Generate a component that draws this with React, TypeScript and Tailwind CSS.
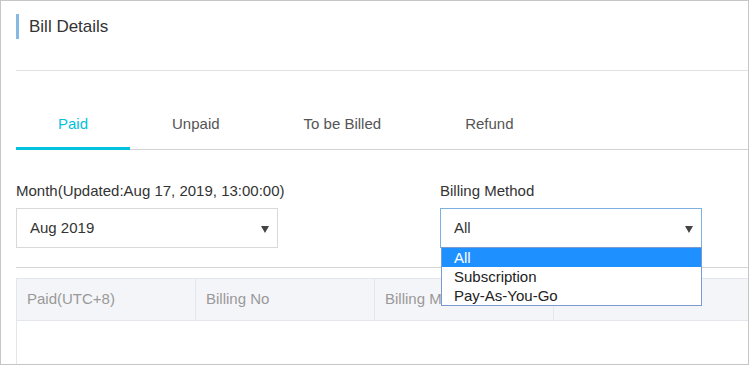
import { useState } from 'react'

const tabs = ['Paid', 'Unpaid', 'To be Billed', 'Refund']
const methods = ['All', 'Subscription', 'Pay-As-You-Go']
const columns = ['Paid(UTC+8)', 'Billing No', 'Billing Method', '']

function Caret() {
    return <span className="absolute right-[8px] top-[17px] h-0 w-0 border-x-[4px] border-t-[7px] border-x-transparent border-t-[#444]" />
}

export default function App() {
    const [active, setActive] = useState(0)
    const [method, setMethod] = useState(0)

    return (
        <div className="h-[366px] w-[749px] bg-white font-['Liberation_Sans',Arial,sans-serif] text-[15px] text-[#333]">
            <div className="flex h-[365px] flex-col overflow-hidden border border-[#c6c6c6] pl-[15px]">
                {/* Title */}
                <div className="h-[70px] border-b border-[#e2e2e2] pt-[13px]">
                    <div className="flex h-[25px] items-center gap-[10px]">
                        <span className="h-full w-[3px] bg-[#86b9e4]" />
                        <h2 className="text-[17px] text-[#333]">Bill Details</h2>
                    </div>
                </div>

                {/* Tabs */}
                <div className="mt-[30px] flex border-b border-[#d3d3d3]">
                    {tabs.map((t, i) => (
                        <button
                            key={t}
                            onClick={() => setActive(i)}
                            className={
                                '-mb-px flex h-[49px] items-center border-b-[3px] px-[42px] pt-[1px] ' +
                                (active === i ? 'border-[#00c1de] text-[#00c1de]' : 'border-transparent text-[#555]')
                            }
                        >
                            {t}
                        </button>
                    ))}
                </div>

                {/* Filters */}
                <div className="mt-[31px] flex">
                    <div className="w-[424px]">
                        <div className="mb-[7px] h-[20px] leading-[20px]">Month(Updated:Aug 17, 2019, 13:00:00)</div>
                        <div className="relative h-[40px] w-[262px] border border-[#d9d9d9] pl-[13px] leading-[38px]">
                            Aug 2019
                            <Caret />
                        </div>
                    </div>
                    <div>
                        <div className="mb-[7px] h-[20px] leading-[20px]">Billing Method</div>
                        <div className="relative h-[40px] w-[262px] border border-[#7eb0e2] pl-[13px] leading-[38px]">
                            {methods[method]}
                            <Caret />
                            <ul className="absolute left-[0px] top-[38px] z-10 w-[261px] border border-[#7b9bd0] bg-white leading-[19px] text-[#222]">
                                {methods.map((m, i) => (
                                    <li
                                        key={m}
                                        onClick={() => setMethod(i)}
                                        className={
                                            'h-[19px] pl-[12px] ' + (i === 0 ? 'bg-[#1e90ff] text-white' : '')
                                        }
                                    >
                                        {m}
                                    </li>
                                ))}
                            </ul>
                        </div>
                    </div>
                </div>

                <div className="mt-[19px] border-b border-[#d5d5d5]" />

                {/* Table */}
                <div className="mt-[10px] flex flex-1 flex-col border-l border-[#e3e7ec]">
                    <div className="flex h-[43px] border-y border-[#e3e7ec] bg-[#f4f5f8] text-[#999]">
                        {columns.map((c, i) => (
                            <div
                                key={i}
                                className={
                                    'flex items-center overflow-hidden whitespace-nowrap pl-[10px] ' +
                                    (i < 3 ? 'w-[179px] border-r border-[#e3e7ec]' : 'flex-1')
                                }
                            >
                                {c}
                            </div>
                        ))}
                    </div>
                    <div className="flex-1" />
                </div>
            </div>
        </div>
    )
}
